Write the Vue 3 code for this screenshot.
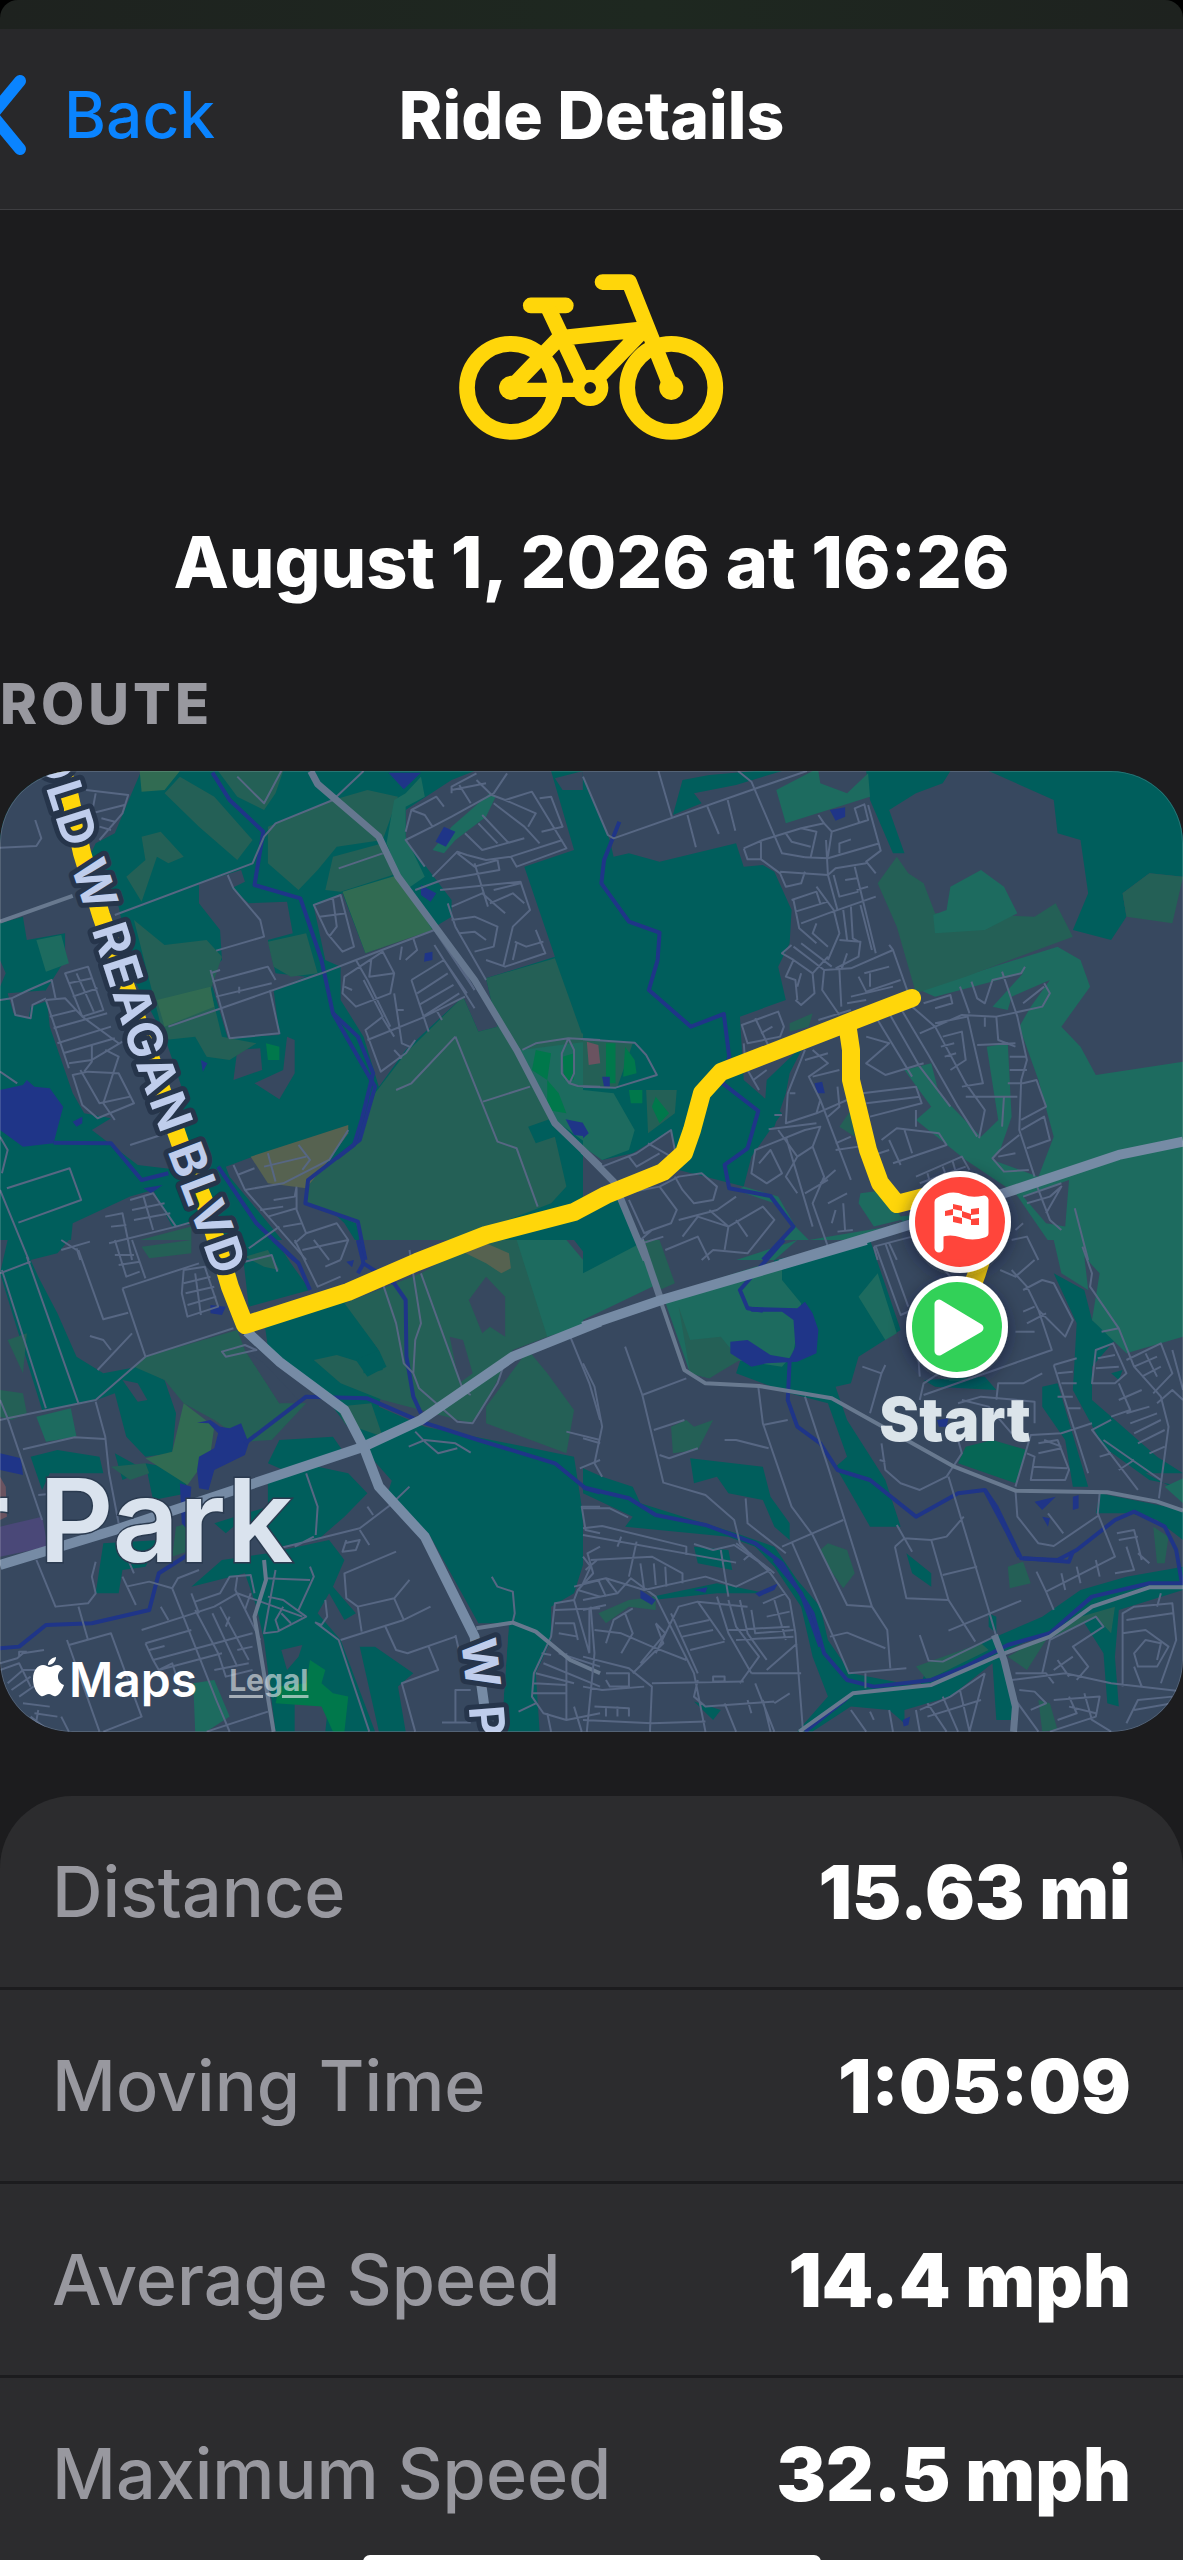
<script setup>
const stats = [
  { label: 'Distance', value: '15.63 mi' },
  { label: 'Moving Time', value: '1:05:09' },
  { label: 'Average Speed', value: '14.4 mph' },
  { label: 'Maximum Speed', value: '32.5 mph' },
]

// The map is made of four tiles, each drawn on its own 1568 x 1500 grid.
const tiles = [
  {
    id: 'nw',
    transform: 'translate(0 -11) scale(.3827 .3333)',
    base: 'wood',
    areas: [
      ['city', 'M0 30H370L340 110L300 220L250 250L230 300L310 440L350 660L430 830L480 1000L440 1130L470 1230L360 1215L240 1110L290 1075L220 1060L190 1000L130 800L120 690L170 600L170 520L70 540L60 470L0 490ZM520 370L630 330L640 365L605 385L650 430L750 425L765 520L700 540L720 640L800 650L715 690L730 825L595 835L545 640L580 600L575 510L520 430ZM820 440L895 400L955 580L1130 505L1180 470L1180 420L1060 240L1060 150L1180 60L1240 33H1440L1500 270L1370 320L1450 590L1270 655L1300 800L1250 815L1210 710L1060 870L990 980L950 830L890 720L890 620L850 600ZM590 1220L660 1190L800 1280L900 1390L960 1500H780L600 1250ZM190 1390L340 1310L400 1290L450 1400L520 1390L570 1500H180ZM750 830L770 840V940L730 1018L665 970L740 930ZM620 870L680 865L685 930L610 960ZM1450 55L1523 33V90L1470 90ZM0 600L15 640L0 680ZM20 700L130 690L130 720L80 740L75 775L35 760Z'],
      ['park', 'M430 100L470 50L560 110L660 240L620 300L520 200ZM570 33H740L720 100L690 150L620 110ZM700 200L870 120L960 160L1000 240L880 260L830 330L780 390L700 310ZM330 350L380 300L370 230L420 215L480 290L440 310L410 290L370 425ZM850 390L870 290L1000 250L1040 340L890 395ZM870 120L960 90L1040 110L1000 240ZM350 480L430 555L540 540L580 590L550 690L580 830L670 850L600 900L540 890L510 830L430 840ZM700 545L800 520L830 640L760 650L715 620ZM1270 655L1450 595L1520 820L1568 840V1080L1480 1060L1380 1100L1400 1150L1450 1130L1480 1280L1440 1330L1060 1500H960L930 1390L800 1330V1260L940 1140L980 1000L1060 880L1210 710L1250 815L1300 800ZM365 1440L500 1400V1500H380Z'],
      ['olive', 'M365 33H470L430 90L370 95ZM895 395L1040 345L1130 510L955 580ZM410 720L550 680L560 740L430 800Z'],
      ['grass', 'M1060 100L1100 50L1110 110L1060 140V230L1110 350L1060 390L1010 250L1030 120ZM95 540L160 525L180 610L120 635ZM1280 100L1295 110L1270 170L1190 240L1160 280L1130 270L1180 200ZM1360 870L1568 840V1180L1450 1080Z'],
      ['dry', 'M655 1190L910 1095V1120L860 1200L800 1285L700 1270Z'],
      ['green', 'M695 850L730 860V900L700 900ZM1400 870L1440 880L1430 960L1390 930ZM1430 960L1460 1000L1480 1060L1430 1050ZM1470 890L1500 880V960L1475 960Z'],
      ['clay', 'M1530 860H1568V915L1540 905Z'],
      ['water', 'M0 990L60 975L70 960L90 980L130 985L165 1040L140 1150L60 1160L0 1110ZM1015 38H1100L1055 88ZM1160 200L1190 215L1165 260L1138 245ZM1100 375L1140 400L1125 425L1100 405ZM525 900L542 910L530 935ZM1478 1078L1530 1090L1540 1130L1500 1125ZM190 1085L215 1070V1090L200 1100ZM375 1285L425 1275L395 1300ZM1110 580L1130 575V600L1108 605Z'],
    ],
    streams: ['M555 38L600 120L688 215L665 375L785 415L840 600L870 760L980 980L940 1140L805 1260L798 1330L935 1385L955 1500', 'M140 1148L290 1150L370 1260L440 1240', 'M570 1220L670 1390L770 1500', 'M870 760L935 830L975 940L945 1080L925 1155L880 1195'],
    streets: [
      'M300 465L660 310L690 230L720 190L870 120L950 33M595 345L610 385L680 480L690 530L565 572M0 263L95 258L108 235L92 180M620 50L690 130L735 33M885 325L1000 280M440 800L840 640L930 600L1135 510L1240 690M550 630L600 835L730 820L705 690M555 665L700 620L720 660M565 710L710 670M550 640L575 630M625 680V700M0 1290L75 1500M18 1285L182 1225L212 1320L48 1388M1190 830L1075 970L1035 990M1190 830L1300 1145L1350 1165L1405 1340M1262 1025L1385 980M340 1155L435 1120M0 720L30 715L75 690L135 660L145 715M30 715L40 765L80 775L85 735L120 715M0 935L45 970M0 1130L20 1170L5 1240',
      'M170 640L230 620L270 750L215 770ZM180 670L240 655M190 710L255 685M200 640L245 755M120 720L170 715L215 770L310 850M120 720L180 925M130 770L200 750M140 805L280 760M150 850L290 800M165 880L300 835M180 910L240 900L320 845M190 945L230 935L310 940L350 1030L255 1075L215 1035ZM210 930L260 1030L340 1010M240 855V905L220 935M275 870L310 890L270 1030L300 1080',
      'M225 90L335 105L320 160L260 240M250 100L240 160L325 135M265 175L300 185M260 200L290 210',
      'M820 435L890 405L925 560L895 575L855 520ZM835 470L905 460M870 415L880 500L860 530M1060 215L1075 150L1140 110L1160 140M1075 150L1110 165L1130 200L1060 240L1110 320M1130 200L1180 170L1290 100L1325 40M1180 100V80L1245 40M1200 75L1230 130M1245 60L1285 105L1320 120L1390 95L1480 265L1350 320L1335 290L1270 300L1220 285L1195 275L1130 350M1180 90L1270 70M1290 130L1370 200L1410 250M1320 120L1400 160L1380 200M1410 115L1440 110L1470 200L1415 215M1250 190L1300 250M1260 165L1330 250M1215 220L1260 270L1370 235M1335 290L1470 240M1195 280L1240 320L1300 300L1305 330L1155 360L1085 390M1150 390L1360 365L1385 450L1340 500L1315 620M1180 440L1260 400L1300 440L1320 460M1240 310L1275 440M1180 480L1240 470L1300 500L1290 560L1240 575M1200 520L1240 515L1270 540M1345 545L1375 560L1420 545M1400 510L1425 580L1320 620L1270 600M1280 430L1340 400L1370 430M1170 430L1190 500L1270 660M1360 370L1290 390M1350 550L1340 600',
      'M900 650L940 620L1000 575L1030 640L1020 700L930 740L895 700ZM930 600L960 660L1020 800M970 600L965 650L1030 640M1050 560L1045 600M1080 535L1090 570L1060 600M950 660L1000 770L955 810L995 935L1060 880L1085 840M960 840L1100 775L1215 710M1075 660L1160 600L1220 700M1075 660L1120 815M1090 700L1170 640M1095 735L1185 675M1105 770L1200 700M1135 555L1215 700L1240 745M1180 570L1240 690M1030 700L1050 850L1070 860M1000 775L1030 830M900 680L920 690M1035 750H1055M1030 870L1050 895M1140 750L1155 780',
      'M610 1215L640 1290L800 1500M620 1245L665 1225M640 1290L740 1270L860 1200L910 1110M700 1180L720 1265M690 1220L800 1190M780 1155L810 1200L790 1230M715 1320L770 1310L775 1280M680 1350L740 1340M700 1370L775 1345M740 1400L790 1390M775 1285V1350L800 1420L770 1450M800 1420L880 1390L910 1440L890 1500M820 1440L860 1500',
      'M275 1370L320 1360L345 1500M340 1320L400 1300L460 1400L285 1450M345 1350L430 1330M350 1380L445 1360M375 1310L400 1410M290 1400L330 1395M160 1470L235 1445M200 1465L210 1500M460 1400L520 1380M650 1465L730 1400',
      'M1365 870L1400 850L1485 835L1500 870V940L1488 970L1468 940V880L1485 835L1568 840M1488 970L1510 978L1568 980',
    ],
    roads: ['M0 485L190 408'],
    avenues: ['M812 33L830 72L990 230L1040 350L1240 660L1350 870L1450 1090L1568 1220'],
    highways: [],
  },
  {
    id: 'ne',
    transform: 'translate(583 -11) scale(.3827 .3333)',
    base: 'city',
    areas: [
      ['wood', 'M0 50L70 240L80 290L120 280L200 305L400 250L420 320L470 315L500 335L545 450L540 550L510 620L530 720L410 770L420 960L460 1000L520 1060L440 1190L420 1280L250 1230L230 1110L130 1180L50 1200L0 1150ZM260 60L330 45L450 33H520L400 75L290 100L310 130L235 165ZM740 33H960L940 70L870 100L800 150L840 280H810L750 120ZM1060 33H1568V350L1480 340L1410 400L1420 470L1380 540L1280 510L1320 400L1300 240L1240 220L1230 120ZM0 1370L100 1310L160 1500H0ZM480 960L580 850L540 940L530 1000L500 1100L470 1110Z'],
      ['grass', 'M505 90L600 33H615L620 70L690 100L745 40L750 110L530 190ZM880 690L1240 560L1300 600L1325 680L1250 800L1300 860L1340 945L1568 905V1500H1250L1130 1300L1000 1200L870 1080L910 1040L840 930L910 910L930 1000L1040 1130L1085 1080L1055 860L1110 850L1120 1070L1090 1170L1070 1200L1190 1250L1230 1130L1190 960L1140 800L1170 740L1220 660L1120 710L1110 750L1070 740L1150 640L920 710ZM0 990L80 1000L135 1110L120 1170L50 1200L0 1160ZM400 1290L420 1280L510 1310L555 1400L590 1440L850 1390L830 1380L760 1400L720 1330L725 1300L790 1290L830 1370L900 1360L530 1500H480L550 1400L500 1330Z'],
      ['city', 'M1150 960L1190 960L1215 1130L1160 1180L1140 1100ZM1150 1310L1270 1260L1260 1400L1210 1390Z'],
      ['park', 'M770 370L820 290L850 340L890 370L920 460L1180 470L1235 430L1280 530L1000 650L870 700L820 500ZM1410 400L1480 340L1568 350L1540 490L1420 470ZM165 990L245 990L240 1060L170 1120ZM0 840L130 850L90 980H0ZM540 790L600 760L590 800L540 815ZM670 1100L700 1050L710 1130Z'],
      ['grass', 'M915 465L950 450L960 380L1040 330L1100 380L1135 460L1050 510L920 520Z'],
      ['green', 'M110 860L135 900L140 940L105 950ZM60 850H85V970H60ZM120 990H155V1030H125ZM190 1010L225 1060L200 1090L180 1040Z'],
      ['clay', 'M10 845L40 855L45 910L15 915Z'],
      ['water', 'M645 150L685 142V170L660 182ZM605 970L625 965L632 1000L612 1000ZM0 1090L15 1120L0 1135ZM50 950L70 950V980H55Z'],
    ],
    streams: ['M95 185L55 300L48 370L120 485L200 518L195 600L172 690L282 800L368 762L382 890L365 970L458 1053L430 1165L370 1215L382 1285L490 1308L550 1400L470 1500'],
    streets: [
      'M0 50L65 225L80 235L440 90L585 33M197 33L232 170M405 33L440 65L520 280L580 292M273 165L295 262M325 140L355 222M378 120L398 212M0 838L135 848L165 885L193 945L85 983L0 980',
      'M420 265L470 240L570 205L630 190L615 165M420 265L430 298L465 298L515 340L530 380L570 370L580 335M465 240V298M530 220L545 245L595 260M570 205L610 215L595 292M630 190L650 215L640 290M580 292L640 295L775 250M650 215L745 180L735 133L710 145L722 190M745 135L778 272L740 305L765 340M670 280V250L700 238M515 335L640 345L635 240M640 345L660 325L740 310M655 345L670 410L720 395M685 360L715 355M710 320L765 580M545 420L610 395L620 430M555 455L640 425M570 490L640 460L765 410M610 380L655 450L670 520L640 600M550 420L565 505L610 550M640 345L665 450M745 380L715 390M680 450L690 540M700 440L705 535L720 545M610 490L600 520L640 560M670 540L725 545L720 590L660 625M725 435L755 570M690 580L675 630M545 555L520 580L550 600L530 650L555 660L560 720M550 560L630 630L700 625L810 570L800 555M570 550L650 620M550 600L600 640L605 700L570 735L555 720M600 640L640 590M570 640L560 680M630 630L625 690L670 765M670 630L675 740M720 650L740 695L830 660M735 640L800 620M750 680V640M700 710L810 680M810 570L850 700M690 730L740 720M615 780L700 750',
      'M415 795L510 755L525 800L515 830L430 850ZM450 775L490 870M465 820L495 800M420 850L425 920L460 990M420 920L470 910L490 870M445 960L480 930',
      'M860 740L920 800L1000 970L1050 1050L1035 1135M830 745L900 880L980 1040L1030 1130M800 760L880 920L960 1040M770 780L860 950M740 830L800 850L740 910L790 945L890 910M890 730L960 705L965 730L920 745M880 820L990 765L1080 770L1200 740L1220 700L1205 670M920 790L1005 770L1045 970L990 980M940 830L990 815L1000 900L960 930M935 860L970 850M945 890L975 880M985 680L1010 760M1015 665L1030 715L1050 730L1070 660L1145 640L1155 620M1095 635L1135 770L1160 900L1145 960L1140 1110L1180 1250M1050 800V770M1080 770L1085 840L1130 860M1030 855L1130 850M1115 890H1160M1115 930H1160M1110 970H1150M1050 1010H1135M1100 1010L1095 1100M1000 1010H1050M1150 970L1185 960L1210 1040L1145 1080M1145 1110L1205 1070L1220 1140L1160 1165M1140 1125L1090 1170L1070 1195L1100 1235L1165 1230M1085 1190L1130 1180M1150 730L1205 680',
      'M580 870L535 1000L530 1090L610 1060L620 1020L590 950L640 910L600 870M580 900L640 880M600 950L670 930M540 1000H555M500 1065H520M485 1108L610 1090M610 1060L690 1020M620 1020L700 1260M640 1070L670 1040L665 980M510 1110L560 1190L600 1160L620 1100L580 1110L450 1170L440 1240L480 1270L520 1240L490 1170L460 1210M530 1130L600 1400M560 1190L530 1250L560 1300M600 1160L630 1250L600 1330L640 1460M620 1270L660 1230M580 1300L640 1260M660 1150L700 1130M660 1170L720 1160M640 1330L690 1300M660 1350L650 1390M665 1415L705 1410M680 1330L685 1415',
      'M730 1000L870 980L885 1030L750 1070M740 1030L880 1010M870 1050V1100M780 1140L820 1105L930 1120L950 1155L810 1210M800 1140L830 1215M840 1110L860 1180M760 1185L800 1170M870 1250L990 1190L1010 1230M880 1270L1000 1220M900 1240L910 1280M940 1220L950 1250M965 1200L975 1240',
      'M50 1220L140 1180L230 1110L240 1170M120 1190L140 1220L200 1180M170 1150L230 1190M110 1300L200 1280L250 1250L310 1240L350 1280L340 1320L290 1330L260 1290L240 1250M200 1280L245 1350L230 1390L180 1410L150 1440M120 1320L160 1420L180 1410M250 1380L350 1350L400 1310M260 1430L300 1370L380 1400L470 1340L500 1380L430 1480L340 1470L310 1500M215 1470L300 1430L330 1500M330 1350L380 1400L370 1470M400 1380L430 1430M155 1450L210 1430',
      'M760 1460L860 1430M770 1500L760 1460M800 1450L820 1500M1150 1310L1250 1270M1160 1330L1220 1310M1180 1260L1220 1380L1250 1410M1220 1310L1250 1280L1210 1360M1285 1345L1320 1500M1120 1440L1160 1430L1190 1500M1130 1410L1150 1390',
    ],
    roads: [],
    avenues: ['M0 1172L80 1265L165 1500'],
    highways: ['M515 1514L860 1392L1100 1300L1400 1185L1568 1145'],
  },
  {
    id: 'sw',
    transform: 'translate(0 469) scale(.3827 .3333)',
    base: 'city',
    areas: [
      ['wood', 'M20 0H180L150 40L80 60L100 110L150 220L200 350L270 400L360 380L430 420L460 520L450 640L380 650L330 590L300 460L240 485L110 510L0 100ZM630 0H720L760 70L810 150L650 200ZM690 240L900 180L990 330L1010 380L990 500L1110 560L960 640L850 470L700 320ZM380 670L480 690L490 760L400 780ZM700 670L730 600L870 590L900 640L760 700ZM80 650L150 630L260 650L270 700L130 700L110 750ZM300 640L380 690L320 720ZM700 700L830 680L910 700L960 760L900 830L830 900L730 920L640 830L590 880L560 850L700 800ZM270 910L420 900L380 980L320 990L310 1060L250 1060ZM500 1040L580 960L700 940L860 900L900 960L870 1040L930 1120L900 1140L860 1060L830 1120L890 1200L980 1475H720L690 1200L670 1100L640 1000ZM1110 560L1500 650L1520 800L1530 950L1500 1060L1440 1100V1200L1400 1300L1410 1475H1310L1330 1150L1250 1150L1120 880L1010 770L1030 700L1070 670L1160 720L1090 800L1130 860L960 640L1050 570ZM1500 0H1568V100ZM940 1220H980L1080 1300L1040 1340L1060 1475H990Z'],
      ['park', 'M380 350L620 270L640 330L730 490H800L710 600L640 605L560 540L480 490L430 420L350 380ZM900 190L1100 100L1250 0H1430L1568 230L1340 330L1260 510L1230 550L1100 510L1000 480L890 430L820 360L880 345L950 370V400L1000 390L990 330ZM20 300L70 280L60 400ZM0 450L60 460L70 520L30 540L0 530ZM1380 330L1430 400L1500 510L1480 640L1270 550V500ZM370 20L500 0V40L390 55ZM640 50L700 30L730 90L690 80ZM290 680L380 670L390 700L340 720ZM460 860L490 850L500 930L450 950ZM880 500L970 490L1000 590L900 550Z'],
      ['wood', 'M990 330L1010 380L960 410L930 360Z'],
      ['grass', 'M1350 0H1480L1568 120V240L1430 290ZM95 530L185 505L200 590L120 605ZM505 1330L560 1320L600 1430L540 1475H510Z'],
      ['city', 'M1270 110L1320 170V290L1280 260L1260 280L1225 180ZM1175 290L1210 300L1235 400L1200 430ZM640 330L690 370L780 480L730 490ZM320 420L360 430L385 480L360 485ZM735 1230L790 1215L780 1250L750 1290ZM770 1390L860 1370L850 1475H770ZM1330 1150L1310 1475H1250L1240 1200Z'],
      ['dry', 'M1200 30L1270 10L1330 40L1335 85L1310 100L1270 70Z'],
      ['olive', 'M480 490L560 560L550 640L490 735L380 655L450 635Z'],
      ['green', 'M810 1260L850 1290L840 1330L870 1360L910 1370L900 1475H870L840 1400L720 1390L730 1340L800 1330Z'],
      ['rail', 'M0 860L110 830L125 920L0 950Z'],
      ['clay', 'M0 710L15 740L18 830L0 840Z'],
      ['water', 'M515 548L550 540L575 560L600 565L630 550L650 610L640 645L560 690L545 750L520 745L515 690L520 650L560 625L570 580L545 550ZM0 640L55 655L60 705L0 690ZM470 730L500 740L490 870L475 850ZM550 195L590 200L580 225L550 220ZM905 65L925 60L920 82Z'],
    ],
    streams: ['M0 1225L50 1220L120 1155L240 1150L390 1110L415 1000L490 945L492 860', 'M640 610L800 470L960 475L1100 545L1250 600L1450 670L1530 745L1568 758', 'M935 0L950 70L1030 130L1060 180L1062 350L1080 470L1100 520', 'M715 0L780 70L810 150', 'M950 70L935 100'],
    streets: [
      'M0 100L80 65M5 90L120 505M70 50L205 490M0 540L20 535L250 480L380 350L610 265M0 480L20 535L110 840M250 485L275 590L285 700L310 850M60 628L195 592L275 597M100 765L150 760M205 30L270 238L335 218M320 145L380 350M320 145L520 70M345 280L255 390M235 288L270 300L290 330M300 0L330 110L365 95M345 0L380 115M300 45H350M310 75L365 65M480 90L535 80L570 200L490 230L475 160ZM480 130L550 110M485 160L560 140M490 195L565 170M510 100L525 225M580 335L640 315L670 330L590 350Z',
      'M160 0L200 30M640 65L710 45L725 95M770 0L830 140L890 110M790 30L870 10L910 0M850 80L890 60M1000 130L1035 250L1055 370L1080 400L1095 445L1195 545L1235 550L1300 430L1315 380M1070 30L1100 250L1085 300L1080 400M1100 100L1210 450L1230 465M1068 620L1110 600L1190 610L1230 638M1085 575L1110 605L1145 640L1195 625M1490 290L1540 430L1568 540M1480 575L1568 600M1568 660L1515 685',
      'M800 700L830 800L825 885M730 925L940 865L1020 795L1070 740M960 800L975 825M940 870L965 915M900 910L940 900L930 930L895 935L905 900M770 920L820 890M1035 935L900 1000L905 1075L935 1100L1030 1075L1070 1020M935 1100L945 1175M1030 1075L1055 1140L1125 1100M1055 1140L890 1200M850 1080L855 1130L840 1155L825 1148L885 1200L965 1475M1005 1155L1035 1230L1065 1240L1190 1190M1120 1220L1145 1290L1050 1330L1085 1475M1190 1185L1205 1260M1285 1010L1300 1040L1340 1055L1345 1120L1340 1145M1155 1448L1230 1448M1190 1448V1350H1230',
      'M95 960L145 1100L230 1090L250 1060L240 1010L250 965M205 1100L230 1200M180 1215L290 1180L370 1430L270 1475M175 1200L260 1475M320 1010L355 1095M335 960L350 1000M330 1040L390 1025L450 1045L465 1015L520 990M450 1045L565 1380L600 1475M500 1060L520 1120M510 1085L575 1060L600 1010L655 1005L665 1060M420 1100L440 1140M370 1170L480 1130L560 1100L620 1060L790 1130M380 1210L500 1170M390 1230L430 1218M380 1210L400 1260L660 1180M400 1260L415 1290L580 1240M440 1190L470 1180M555 1120L620 1280M575 1100L650 1260M510 1110L570 1240M620 1010L615 1050L680 1200M600 1130L590 1160M640 1110L655 1060M560 1290L650 1270M415 1290L450 1270L470 1340M570 1240L590 1310L660 1290M620 1230L660 1220M690 1015L810 1020M720 990L690 1180L725 1175L800 1130L740 1080L700 1070M810 980L820 1010L780 1110M740 1100L720 1140L730 1175M735 1120L760 1150',
      'M0 1270L45 1255L60 1240L115 1230M0 1290L50 1270L80 1340M50 1250V1235H70M20 1330L60 1290L120 1290M30 1350L80 1310M50 1370L100 1330M60 1390L130 1400M90 1420L150 1430M80 1430L130 1475M160 1430L180 1475M100 1410L90 1475M540 1475L700 1415',
      'M1568 800H1520L1530 870L1568 880M1568 920L1535 940L1550 1000L1510 1050L1500 1080L1450 1090L1440 1190L1395 1300L1390 1370L1420 1420L1480 1440L1568 1420M1510 1050L1568 1070M1500 1080L1540 1240M1450 1150H1500L1510 1200M1450 1110L1568 1105M1460 1180L1510 1190M1540 1110V1240M1415 1240L1440 1245M1400 1300L1500 1330M1395 1330L1480 1335M1390 1360H1480M1480 1240V1440M1420 1270L1568 1340M1400 1390L1355 1415M1500 1400L1520 1475M1430 1420L1440 1475M1460 1240L1568 1280M1500 1040L1568 1020M1560 960L1530 990',
    ],
    roads: ['M690 960L695 1020L665 1130L715 1475', 'M1245 1165L1340 1148L1400 1175L1490 1260L1568 1300'],
    avenues: [],
    highways: ['M0 975L300 870L950 620L1100 540L1340 350L1568 245', 'M645 275L730 365L900 510L950 620L990 740L1110 890L1240 1190L1275 1475'],
  },
  {
    id: 'se',
    transform: 'translate(583 469) scale(.3827 .3333)',
    base: 'city',
    areas: [
      ['wood', 'M0 0H150L180 120L0 240ZM500 60L750 0L830 270L720 350L700 430L660 440L690 540L790 720L830 860L750 860L700 760L660 680L690 650L640 490L540 460L400 400ZM0 685L50 710L130 740L150 790L400 880L500 920L560 1020L620 1100L640 1200L700 1300L880 1340L900 1280L1100 1180L1200 1130L1300 1050L1420 1010L1568 980V1050L1400 1110L1390 1250L1400 1400L1370 1390L1360 1240L1300 1130L1110 1230L1100 1260L1130 1440H1080L1070 1270L960 1370L840 1410V1450L800 1410L700 1400L600 1475H560L640 1370L600 1250L570 1100L500 980L450 920L380 890L110 860L130 830L0 760ZM280 655L470 680L490 770L540 850L540 900L500 860L470 780L380 760L350 710L290 730ZM1230 100L1310 150L1330 240L1390 300L1330 380V480L1400 550L1500 650L1568 700V740L1480 720L1360 620L1280 450L1290 250ZM1200 440L1240 430L1320 740H1280L1260 600L1200 500ZM890 420L1050 410L1080 450L920 440ZM1350 760L1568 810V900L1500 840L1430 820L1340 820ZM845 940L910 1000V1040L860 1000ZM180 1070L350 1030L480 1060L350 1060L180 1080ZM290 920L380 930L390 990L300 970ZM1060 1120L1080 1130V1180L1060 1160ZM290 1385L360 1410L340 1440ZM1380 400L1410 390L1400 420ZM1470 700L1568 760V700Z'],
      ['grass', 'M0 100L150 10L200 130L0 240ZM210 170L450 80L520 60V120L570 190L550 340L520 380L400 360L330 415L280 400ZM720 170L770 100L820 280L790 300ZM400 60L560 0L500 60ZM1230 0H1568V290L1420 340L1330 240L1350 100L1310 50L1320 150L1250 100ZM1520 740L1568 715V790Z'],
      ['park', 'M250 200L280 300L360 290L410 360L330 415L280 400ZM160 0H200L240 130L200 150ZM230 560L270 540L290 560L340 540L300 630L235 640ZM620 930L640 910L690 930L710 1000L680 1045L640 980ZM1110 980L1150 965L1170 1030L1115 1045ZM870 1280L1040 1210L1060 1230L900 1320ZM1110 1250L1300 1130L1390 1100L1380 1180L1340 1130L1210 1200L1160 1290ZM40 1120L120 1080L190 1070L190 1110L120 1100L60 1150ZM1490 860L1530 890L1520 970L1500 970ZM1190 1380L1220 1390L1240 1470L1200 1475Z'],
      ['lawn', 'M1000 620L1070 600L1160 630L1130 730L980 670Z'],
      ['water', 'M430 200L560 205L580 185L600 220L615 270L610 340L560 365L480 370L440 380L385 340L385 305L430 300L490 345L540 355L555 320L550 240L520 215L440 215ZM150 1050L190 1080L180 1095L150 1075ZM1180 785L1235 770L1200 810ZM1280 770L1295 765V805L1280 810ZM1200 830L1220 835L1215 860ZM450 1060L510 1030L500 1050L460 1070ZM290 1050L325 1042L320 1058ZM835 1440L855 1430L850 1455L838 1460ZM925 540L955 535L950 560H930Z'],
    ],
    streams: ['M525 0L410 150L430 205L470 212M540 360L535 480L560 560L620 610L665 690L750 720L870 830L980 760L1050 750L1080 800L1145 955L1240 960L1290 930L1390 840L1440 815L1520 860L1550 930L1565 1030', 'M0 742L120 775L190 825L320 855L450 910L520 970L600 1120L630 1240L690 1320L760 1340L910 1320L1000 1280L1110 1215L1220 1180L1330 1070L1480 1030H1568', 'M1050 750L1110 880L1140 950M1150 955L1270 965L1280 935M690 1375L580 1475', 'M500 960L570 1060L620 1220'],
    streets: [
      'M0 370L30 440L50 560L30 670L50 710M0 595L45 610M110 320L155 465L210 728L320 765L395 840L410 910L435 940L500 1000M155 465L270 415M185 570L265 540M200 645L225 655L300 625M370 600H400L485 625M458 440L470 550L545 800L600 885L690 1095L755 1100M470 555L535 540M580 470L640 680L755 1100L795 1170L803 1285M425 775L430 850L530 940M520 920L680 840M545 905L650 1180L695 1300L845 1285M645 1190L690 1178L790 1225M738 1300V1345M730 380L780 400L750 520M790 375L780 400',
      'M780 610L790 690L830 730L880 750L950 710L990 640L980 600M775 660L790 665M820 855L860 935M815 920L840 895L910 900L950 890L995 830M815 920L845 1075L955 1080L1025 1205M910 900L955 1080M955 710L1060 1110L1080 1190M940 1005L1030 980M955 1172L1145 1082M880 1185L903 1262L940 1265L1075 1190M1130 750L1135 830L1190 910L1230 918L1345 828M1215 820L1255 880M1350 760L1345 820L1390 950L1210 1055L1185 995M1210 1055L1230 1110M1395 880L1440 870L1460 960M1400 900L1450 890M1420 920L1440 990L1390 1000M1450 940L1480 970M1250 1000L1260 1050M1290 980L1300 1030M1340 960L1350 1010',
      'M765 20L830 225L860 210M790 10L850 200M900 0L920 60L960 110M870 260L880 410M890 465L1225 330L1190 210M1120 90L1160 140L1190 210L1260 290L1280 240L1230 130L1200 120L1150 150M1090 90L1130 110L1180 60M1150 215L1180 200M1160 250L1210 220M1130 275H1180M1230 375L1290 355M1230 375L1320 700M1240 400L1280 395M1250 430L1290 430M1240 470H1280M1265 505H1300M1305 20L1330 100L1325 140L1400 265L1440 380L1510 470L1530 560L1505 775M1355 275L1400 265M1340 330L1385 310L1420 400L1390 430L1330 430ZM1345 355L1390 345M1340 385L1400 380M1420 360L1510 310L1540 400L1490 460M1440 380L1500 350M1460 410L1510 380M1470 340L1500 410M1540 330L1568 450M1500 490L1540 450L1568 480M1400 430L1430 510L1380 530M1400 480L1460 450M1420 520L1480 500M1430 550L1500 520M1440 580L1510 540M1450 610L1520 570M1480 640L1520 620M1380 540L1330 570L1450 750M1360 600L1510 720M1380 640L1350 650M1440 660L1400 690M1330 550L1250 580L1170 585L1130 740M1190 610L1240 600L1270 690L1260 720H1170L1180 650L1160 640M1190 640L1250 625M1175 680L1265 685M1205 600L1250 620M980 490L1040 470L1180 485V550M1080 480L1085 430L1150 430L1200 400M990 480L1060 500L1120 580M880 480L890 430L930 400',
      'M0 805H70L118 832M0 865L50 858L270 920V945M0 885L400 968M140 905L120 1010M0 950L20 980L0 1030L60 1015L160 1050L320 1010L400 1040L490 990L395 915L340 930L290 912M20 960L180 950L260 1000L260 1030M100 890L90 920M360 930L380 1070M150 970L160 1050M185 970L190 1035M215 980L218 1040M40 1020L60 1070M60 1015L90 1060M400 910L435 940L490 1000L540 1080L555 1180L575 1475M420 960L440 940M0 1080L90 1060L125 1015L190 1070L290 1300L320 1475M0 1110L60 1095M20 1100L30 1240L10 1475M30 1170L100 1180L180 1220L270 1260M60 1210L80 1140L130 1105M110 1120L130 1180L100 1240M130 1300L210 1210L190 1150M150 1270L215 1180L190 1150M190 1240L250 1100L300 1085L370 1200M230 1120L300 1300M250 1160L330 1140M260 1190L340 1170M280 1230L370 1205M350 1070L380 1180L440 1300M380 1080L400 1160L460 1250L410 1330M410 1080L430 1180L480 1260M380 1170L540 1160M440 1110L450 1180L550 1170M470 1090L530 1060M480 1130L540 1115M500 1080L530 1200M440 1300H570M300 1085L430 1100M400 1200L550 1190M480 1290L560 1210M0 1250L120 1285L180 1340L175 1475M60 1300H120V1340H70L60 1320M0 1340L50 1350L160 1340M30 1400L120 1405V1430M60 1400V1430M90 1400V1430M0 1440L180 1450L320 1445M180 1330L420 1325M300 1320L290 1370L320 1400L500 1385M370 1390L400 1475M430 1380L440 1420M470 1380L490 1475M340 1310H370V1325H340ZM500 1390L540 1360M500 1475L450 1330',
      'M700 1410L740 1475M750 1415L760 1440M800 1410L810 1475M870 1410L880 1475M900 1390L950 1475M940 1370L980 1475M985 1350L1010 1475M1010 1475L1050 1300M900 1430L1040 1380M880 1410L960 1370L1050 1300M1120 1320L1260 1300L1380 1330L1568 1355M1130 1300L1210 1300L1230 1330M1140 1350L1180 1355L1210 1390L1170 1410M1130 1380L1190 1475M1200 1300L1220 1200L1340 1130L1360 1160L1280 1220L1320 1280L1290 1320M1230 1290L1280 1250M1240 1260L1270 1310M1410 1340V1120L1440 1100L1540 1090L1550 1200L1510 1330M1420 1140L1540 1120M1410 1180L1470 1170L1530 1220L1500 1280H1450L1440 1240L1470 1200L1510 1210L1500 1260M1500 1100L1510 1060M1440 1280L1460 1340M1230 1380L1350 1370L1340 1430L1220 1475M1270 1370L1290 1420L1240 1440M1310 1360L1330 1440L1380 1475M1270 1400L1340 1420M1540 1370L1450 1380L1420 1450M1440 1410L1540 1390',
    ],
    roads: ['M565 1475L705 1360L910 1335L1090 1245L1220 1190L1330 1100L1480 1042H1568', 'M205 190L265 390L320 430L460 438L650 475L760 545L970 680L1130 752L1370 757L1500 785L1568 812'],
    avenues: ['M150 0L205 185', 'M1075 1185L1100 1260L1130 1400L1125 1475'],
    highways: ['M0 260L205 180L740 0'],
  },
]
</script>

<template>
  <div class="screen">
    <div class="backdrop" aria-hidden="true"></div>
    <header class="nav">
      <button class="back" type="button">
        <svg class="chevron" viewBox="0 0 30 84" aria-hidden="true"><path d="M20 8L-8 42L20 76" /></svg>
        <span>Back</span>
      </button>
      <h1 class="title">Ride Details</h1>
    </header>

    <main class="content">
      <svg class="bike" viewBox="180 130 794 500" role="img" aria-label="Bicycle">
        <g class="bike-lines">
          <circle cx="336" cy="474" r="132" />
          <circle cx="816" cy="474" r="132" />
          <path d="M610 157H690L816 474" stroke-linecap="round" stroke-linejoin="round" />
          <path d="M395 227H500" stroke-linecap="round" />
          <path d="M450 240L550 452M336 474L480 325L735 298L592 447" stroke-linejoin="round" />
          <path d="M336 480H545" stroke-width="42" />
          <circle cx="573" cy="474" r="36" stroke-width="37" />
        </g>
        <circle class="hub" cx="336" cy="474" r="36" />
        <circle class="hub" cx="816" cy="474" r="36" />
      </svg>
      <p class="date">August 1, 2026 at 16:26</p>

      <h2 class="section">ROUTE</h2>
      <div class="map">
        <svg class="map-art" viewBox="0 0 1183 961" role="img" aria-label="Map of the route">
          <defs>
            <path id="reagan" d="M34 -22L46 17L73 102L92 160L128 272L170 387L205 479L235 565" />
            <path id="wparmer" d="M461 869L469 939L480 1080" />
            <filter id="drop" x="-40%" y="-40%" width="180%" height="180%">
              <feDropShadow dx="0" dy="4" stdDeviation="9" flood-color="#0a1626" flood-opacity=".5" />
            </filter>
          </defs>
          <g v-for="t in tiles" :key="t.id" :transform="t.transform">
            <rect :class="t.base" width="1568" height="1500" />
            <path v-for="(a, i) in t.areas" :key="i" :class="a[0]" :d="a[1]" />
          </g>
          <g v-for="t in tiles" :key="t.id" :transform="t.transform" class="lines">
            <path v-for="d in t.streams" :key="d" class="stream" :d="d" />
            <path v-for="d in t.streets" :key="d" class="street" :d="d" />
            <path v-for="d in t.roads" :key="d" class="road" :d="d" />
          </g>
          <g v-for="t in tiles" :key="t.id" :transform="t.transform" class="lines">
            <path v-for="d in t.avenues" :key="d" class="avenue" :d="d" />
            <path v-for="d in t.highways" :key="d" class="highway" :d="d" />
          </g>

          <path class="route" d="M60 -10L69 22L82 82L101 144L180 372L205 432L230 516L245 554L348 521L417 491L486 464L574 441L606 424L663 401L684 382L692 359L702 322L721 301L847 252L912 227M847 252L851 279V309L868 379L880 412L897 433L924 426L965 440L984 480L977 502L957 556" />

          <text class="road-label"><textPath href="#reagan">OLD W REAGAN BLVD</textPath></text>
          <text class="road-label"><textPath href="#wparmer">W PARMER LN</textPath></text>
          <text class="city-label" x="293" y="791">Cedar Park</text>

          <g filter="url(#drop)">
            <circle cx="960" cy="451" r="51" fill="#fff" />
            <circle cx="960" cy="451" r="45" fill="#ff443a" />
            <path class="flag" d="M939 477V431Q951 423 962 428Q972 432 984 429V462Q972 466 962 462Q950 458 939 462" />
            <path fill="#ff443a" d="M953 433l9 2v5l-9-2zM962 440l9 3v6l-9-3zM971 438l8-1v6l-8 1zM945 440l8-2v6l-8 1zM953 445l9 2v6l-9-2zM971 448l8-1v7l-8 0z" />
          </g>
          <g filter="url(#drop)">
            <circle cx="957" cy="556" r="51" fill="#fff" />
            <circle cx="957" cy="556" r="45" fill="#30d158" />
            <path class="play" d="M939 533V580L979 557Z" />
          </g>
          <text class="pin-label" x="955" y="670">Start</text>
        </svg>
        <div class="attribution">
          <svg class="apple" viewBox="0 0 32 40" aria-hidden="true">
            <path d="M17 10C19 10 21 8 24 8C27 8 29 10 30 12C26 14 25 17 25 20C25 24 28 27 31 28C29 34 26 38 23 39C20 40 18 37 16 37C13 37 11 40 8 39C3 36 0 29 0 22C0 13 5 8 10 8C13 8 15 10 17 10ZM15 8C15 4 18 1 23 0C23 4 20 8 15 8Z" />
          </svg>
          <span class="maps">Maps</span>
          <a class="legal" href="#legal">Legal</a>
        </div>
      </div>

      <dl class="stats">
        <div v-for="s in stats" :key="s.label" class="stat">
          <dt>{{ s.label }}</dt>
          <dd>{{ s.value }}</dd>
        </div>
      </dl>
    </main>
    <div class="home-bar" aria-hidden="true"></div>
  </div>
</template>

<style>
body {
  margin: 0;
  background: #000;
}
</style>

<style scoped>
.screen {
  position: relative;
  height: 100vh;
  overflow: hidden;
  background: #1c1c1e;
  color: #fff;
  font-family: Inter, "Liberation Sans", sans-serif;
}
.screen::before {
  content: "";
  position: absolute;
  inset: 0 0 auto;
  height: 29px;
  background: #000;
}
.backdrop {
  position: relative;
  height: 29px;
  border-radius: 18px 18px 0 0;
  background: linear-gradient(90deg, #1e221f, #1e2820 55%, #1e221f);
}
.nav {
  position: relative;
  display: grid;
  grid-template-columns: 1fr auto 1fr;
  align-items: center;
  height: 181px;
  padding-bottom: 9px;
  box-sizing: border-box;
  background: #28282a;
  border-bottom: 1px solid #3e3e41;
}
.back {
  display: flex;
  align-items: center;
  gap: 34px;
  padding: 0;
  border: 0;
  background: none;
  color: #0a84ff;
  font-family: inherit;
  font-size: 64px;
  font-weight: 500;
  line-height: 80px;
}
.chevron {
  width: 30px;
  height: 84px;
  fill: none;
  stroke: currentColor;
  stroke-width: 12;
  stroke-linecap: round;
  stroke-linejoin: round;
}
.title {
  margin: 0;
  font-size: 66px;
  line-height: 80px;
  font-weight: 800;
}
.content {
  padding-top: 63px;
}
.bike {
  display: block;
  width: 265px;
  height: 167px;
  margin: 0 auto;
}
.bike-lines {
  fill: none;
  stroke: #ffd60a;
  stroke-width: 47;
}
.hub {
  fill: #ffd60a;
}
.date {
  margin: 78px 0 0;
  font-size: 72px;
  line-height: 88px;
  font-weight: 800;
  text-align: center;
}
.section {
  margin: 62px 0 0;
  color: #98989f;
  font-size: 56px;
  line-height: 72px;
  font-weight: 800;
  letter-spacing: 4px;
}
.map {
  position: relative;
  margin-top: 31px;
  overflow: hidden;
  border-radius: 72px;
}
.map::after {
  content: "";
  position: absolute;
  inset: 0;
  border: 1px solid rgba(255, 255, 255, 0.15);
  border-radius: 72px;
  pointer-events: none;
}
.map-art {
  display: block;
  width: 100%;
}
.city { fill: #37485f; }
.wood { fill: #005e5c; }
.park { fill: #246056; }
.grass { fill: #1d6b5f; }
.olive { fill: #316b52; }
.dry { fill: #566250; }
.green { fill: #00784b; }
.lawn { fill: #066655; }
.clay { fill: #6a5360; }
.rail { fill: #4a4878; }
.water { fill: #1f3588; }
.lines path {
  fill: none;
  stroke-linejoin: round;
  vector-effect: non-scaling-stroke;
}
.lines .stream { stroke: #1f3588; stroke-width: 4; }
.lines .street { stroke: #576783; stroke-width: 2; }
.lines .road { stroke: #68798f; stroke-width: 4; }
.lines .avenue { stroke: #65778f; stroke-width: 7; }
.lines .highway { stroke: #768ba5; stroke-width: 10; }
.route {
  fill: none;
  stroke: #ffd60a;
  stroke-width: 18;
  stroke-linecap: round;
  stroke-linejoin: round;
}
.road-label {
  fill: #bfcdec;
  stroke: #26354b;
  stroke-width: 10;
  stroke-linejoin: round;
  paint-order: stroke;
  font-size: 48px;
  font-weight: 700;
  letter-spacing: 3px;
}
.city-label {
  fill: #dae3ee;
  stroke: #2b3b50;
  stroke-width: 3;
  paint-order: stroke;
  font-size: 116px;
  font-weight: 600;
  text-anchor: end;
}
.pin-label {
  fill: #dbe4ea;
  font-size: 60px;
  font-weight: 900;
  text-anchor: middle;
}
.flag {
  fill: #fff;
  stroke: #fff;
  stroke-width: 9;
  stroke-linecap: round;
  stroke-linejoin: round;
}
.play {
  fill: #fff;
  stroke: #fff;
  stroke-width: 9;
  stroke-linejoin: round;
}
.attribution {
  position: absolute;
  left: 33px;
  bottom: 22px;
  display: flex;
  align-items: center;
}
.apple {
  width: 32px;
  height: 40px;
  margin-right: 4px;
  margin-bottom: 6px;
  fill: #fff;
}
.maps {
  font-size: 48px;
  line-height: 60px;
  font-weight: 600;
}
.legal {
  margin-left: 32px;
  color: rgba(222, 228, 230, 0.65);
  font-size: 30px;
  line-height: 36px;
  font-weight: 700;
  text-decoration: underline;
  text-decoration-thickness: 3px;
  text-underline-offset: 4px;
}
.stats {
  margin: 64px 0 0;
  overflow: hidden;
  border-radius: 72px 72px 0 0;
  background: #2c2c2e;
}
.stat {
  display: flex;
  align-items: center;
  justify-content: space-between;
  height: 191px;
  padding: 0 52px;
  line-height: 88px;
}
.stat + .stat {
  border-top: 3px solid #1c1c1e;
}
.stat dt {
  color: #98989f;
  font-size: 70px;
  font-weight: 500;
}
.stat dd {
  margin: 0;
  font-size: 74px;
  font-weight: 900;
}
.home-bar {
  position: absolute;
  left: 50%;
  bottom: -9px;
  width: 458px;
  height: 14px;
  margin-left: -229px;
  border-radius: 7px;
  background: #fff;
}
</style>
